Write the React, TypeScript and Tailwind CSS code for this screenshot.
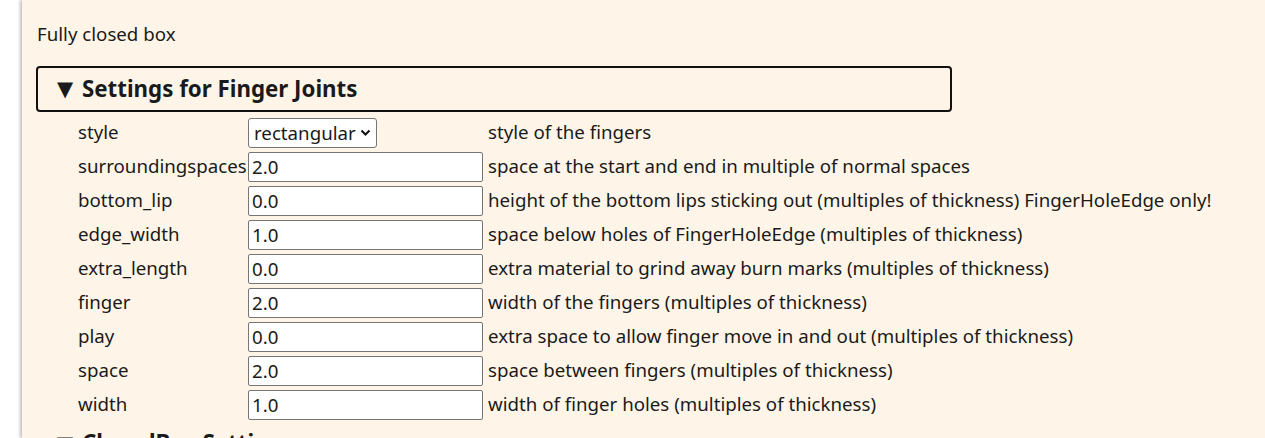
const rows: [string, string, string][] = [
  ['surroundingspaces', '2.0', 'space at the start and end in multiple of normal spaces'],
  ['bottom_lip', '0.0', 'height of the bottom lips sticking out (multiples of thickness) FingerHoleEdge only!'],
  ['edge_width', '1.0', 'space below holes of FingerHoleEdge (multiples of thickness)'],
  ['extra_length', '0.0', 'extra material to grind away burn marks (multiples of thickness)'],
  ['finger', '2.0', 'width of the fingers (multiples of thickness)'],
  ['play', '0.0', 'extra space to allow finger move in and out (multiples of thickness)'],
  ['space', '2.0', 'space between fingers (multiples of thickness)'],
  ['width', '1.0', 'width of finger holes (multiples of thickness)'],
];

function Arrow() {
  return (
    <span className="mr-[6px] inline-block w-[19px] text-[21px]" style={{ fontFamily: '"DejaVu Sans", sans-serif' }}>▼</span>
  );
}

export default function App() {
  return (
    <div className="flex h-[438px] overflow-hidden bg-white text-[18.7px] text-[#1a1a1a]" style={{ fontFamily: '"Noto Sans", sans-serif' }}>
      <div className="w-[22px] shrink-0 bg-white" />
      <div className="flex-1 bg-[#fef5e8] pl-[14px] shadow-[-2px_0_3px_rgba(0,0,0,0.25)]">
        <div className="pt-[20px] pl-[1px] leading-[28px]">Fully closed box</div>
        <div className="mt-[18px] flex h-[46px] w-[916px] items-center rounded-[4px] border-2 border-[#111] pl-[19px] text-[22.3px] font-bold leading-none">
          <Arrow />Settings for Finger Joints
        </div>
        <table className="ml-[38px] mt-[4px] border-collapse">
          <tbody>
            <tr className="h-[34px]">
              <td className="w-[174px] p-0 pl-[4px] pb-[2px] align-middle">style</td>
              <td className="w-[235px] p-0 align-middle">
                <div className="flex h-[30px] w-[129px] items-center justify-between rounded-[3px] border border-[#767676] bg-white pl-[5px] pr-[5px]">
                  <span className="whitespace-nowrap">rectangular</span>
                  <svg width="11" height="8" viewBox="0 0 11 8" fill="none" stroke="#111" strokeWidth="2" className="shrink-0">
                    <path d="M1.5 1.5 L5.5 5.5 L9.5 1.5" />
                  </svg>
                </div>
              </td>
              <td className="p-0 pl-[5px] pb-[2px] align-middle">style of the fingers</td>
            </tr>
            {rows.map(([label, value, help]) => (
              <tr key={label} className="h-[34px]">
                <td className="p-0 pl-[4px] pb-[2px] align-middle">{label}</td>
                <td className="p-0 align-middle">
                  <div className="flex h-[30px] w-[235px] items-center rounded-[2px] border border-[#767676] bg-white pl-[3px]">{value}</div>
                </td>
                <td className="p-0 pl-[5px] pb-[2px] align-middle whitespace-nowrap">{help}</td>
              </tr>
            ))}
          </tbody>
        </table>
        <div className="mt-[10px] pl-[21px] text-[22.3px] font-bold leading-none">
          <Arrow />ClosedBox Settings
        </div>
      </div>
    </div>
  );
}
